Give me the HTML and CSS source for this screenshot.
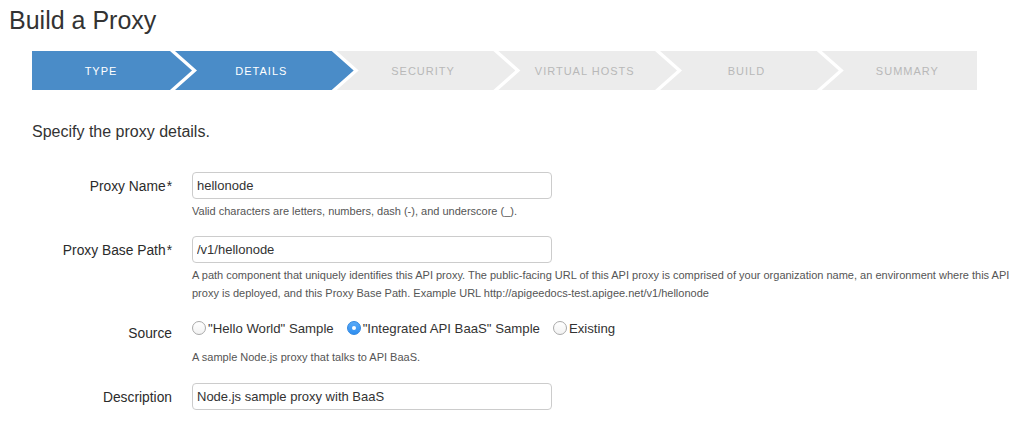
FILE: index.html
```html
<!DOCTYPE html>
<html>
<head>
<meta charset="utf-8">
<link rel="stylesheet" href="styles.css">
</head>
<body>
<div class="page">
  <h1 class="title">Build a Proxy</h1>
  <ol class="wizard">
    <li class="step first done">Type</li>
    <li class="step done">Details</li>
    <li class="step">Security</li>
    <li class="step">Virtual Hosts</li>
    <li class="step">Build</li>
    <li class="step last">Summary</li>
  </ol>
  <p class="intro">Specify the proxy details.</p>
  <form class="form">
    <div class="row">
      <label class="label">Proxy Name<span class="req">*</span></label>
      <div class="field">
        <input class="input" type="text" value="hellonode">
        <p class="help">Valid characters are letters, numbers, dash (-), and underscore (_).</p>
      </div>
    </div>
    <div class="row path">
      <label class="label">Proxy Base Path<span class="req">*</span></label>
      <div class="field">
        <input class="input" type="text" value="/v1/hellonode">
        <p class="help">A path component that uniquely identifies this API proxy. The public-facing URL of this API proxy is comprised of your organization name, an environment where this API proxy is deployed, and this Proxy Base Path. Example URL http://apigeedocs-test.apigee.net/v1/hellonode</p>
      </div>
    </div>
    <div class="row source">
      <label class="label">Source</label>
      <div class="field">
        <div class="radios">
          <span class="radio"><span class="radio-dot"></span>"Hello World" Sample</span>
          <span class="radio"><span class="radio-dot checked"></span>"Integrated API BaaS" Sample</span>
          <span class="radio"><span class="radio-dot"></span>Existing</span>
        </div>
        <p class="help help-source">A sample Node.js proxy that talks to API BaaS.</p>
      </div>
    </div>
    <div class="row">
      <label class="label">Description</label>
      <div class="field">
        <input class="input" type="text" value="Node.js sample proxy with BaaS">
      </div>
    </div>
  </form>
</div>
</body>
</html>
```
FILE: styles.css
```css
body {
  margin: 0;
  font-family: "Liberation Sans", Arial, sans-serif;
  color: #333;
  background: #fff;
}
.page {
  padding: 0 0 0 9px;
}
.title {
  margin: 5px 0 0;
  font-size: 25px;
  line-height: 30px;
  font-weight: normal;
  color: #333;
}
.wizard {
  list-style: none;
  margin: 16px 0 0 23px;
  padding: 0;
  display: flex;
  width: 945px;
  height: 39px;
}
.step {
  box-sizing: border-box;
  height: 39px;
  display: flex;
  align-items: center;
  justify-content: center;
  flex: 0 0 auto;
  width: 178.7px;
  margin-left: -17px;
  padding: 0 25px 0 19px;
  background: #ececec;
  color: #b8b8b8;
  font-size: 11px;
  letter-spacing: 1px;
  text-transform: uppercase;
  clip-path: polygon(0 0, calc(100% - 22px) 0, 100% 50%, calc(100% - 22px) 100%, 0 100%, 22px 50%);
}
.step.first {
  width: 160px;
  margin-left: 0;
  padding: 0 22px 0 0;
  clip-path: polygon(0 0, calc(100% - 22px) 0, 100% 50%, calc(100% - 22px) 100%, 0 100%);
}
.step.last {
  flex: 1 1 auto;
  width: auto;
  padding: 0 0 0 16px;
  clip-path: polygon(0 0, 100% 0, 100% 100%, 0 100%, 22px 50%);
}
.step.done {
  background: #4a8cc8;
  color: #fff;
}
.intro {
  margin: 32px 0 0 23px;
  font-size: 16px;
  line-height: 20px;
}
.form {
  margin-top: 30px;
}
.row {
  display: grid;
  grid-template-columns: 163px 1fr;
  column-gap: 20px;
  margin-bottom: 16px;
}
.row.path,
.row.source {
  margin-bottom: 17px;
}
.label {
  text-align: right;
  font-size: 13.8px;
  line-height: 18px;
  padding-top: 6px;
  color: #2b2b2b;
}
.req {
  margin-left: 1px;
}
.input {
  display: block;
  box-sizing: border-box;
  width: 360px;
  height: 27px;
  margin: 0;
  padding: 0 4px;
  border: 1px solid #ccc;
  border-radius: 4px;
  font: 13px "Liberation Sans", Arial, sans-serif;
  color: #333;
}
.help {
  margin: 3px 0 0;
  font-size: 11px;
  line-height: 18px;
  color: #555;
}
.radios {
  display: flex;
  align-items: center;
  height: 18px;
  font-size: 13.2px;
}
.radio {
  display: flex;
  align-items: center;
  margin-right: 13px;
}
.radio-dot {
  box-sizing: border-box;
  width: 14px;
  height: 14px;
  margin-right: 2px;
  border-radius: 50%;
  border: 1px solid #a9a9a9;
  background: linear-gradient(#fff, #f2f2f2);
  display: flex;
  align-items: center;
  justify-content: center;
}
.radio-dot.checked {
  border-color: #2f86e0;
  background: linear-gradient(#5aaaf7, #2e8ef0);
}
.radio-dot.checked::after {
  content: "";
  width: 4px;
  height: 4px;
  border-radius: 50%;
  background: #fff;
}
.help-source {
  margin-top: 11px;
}
```
